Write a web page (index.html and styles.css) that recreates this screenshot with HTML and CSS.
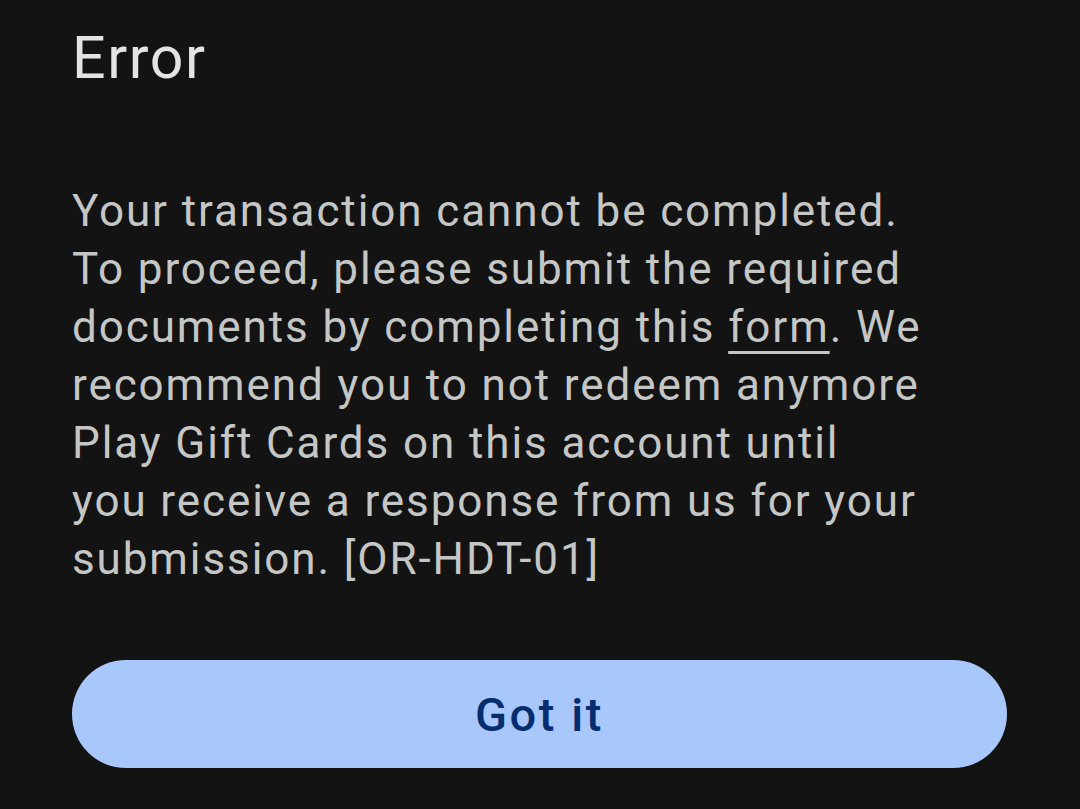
FILE: index.html
```html
<!DOCTYPE html>
<html lang="en">

<head>
    <meta charset="UTF-8">
    <meta name="viewport" content="width=device-width, initial-scale=1.0">
    <title>Error</title>
    <link rel="stylesheet" href="styles.css">
</head>

<body>
    <!-- Error dialog -->
    <div class="dialog">
        <h1 class="dialog-title">Error</h1>
        <p class="dialog-message">
            Your transaction cannot be completed.<br>
            To proceed, please submit the required<br>
            documents by completing this <a href="#" class="form-link">form</a>. We<br>
            recommend you to not redeem anymore<br>
            Play Gift Cards on this account until<br>
            you receive a response from us for your<br>
            submission. [OR-HDT-01]
        </p>
        <button class="dialog-button">Got it</button>
    </div>
</body>

</html>
```

FILE: styles.css
```css
/* Dark dialog */
body {
    font-family: Roboto, "Noto Sans", sans-serif;
    margin: 0;
    padding: 0;
    background-color: #131313;
}

.dialog {
    padding: 23px 73px 0 72px;
    display: flex;
    flex-direction: column;
}

.dialog-title {
    margin: 0;
    font-size: 59px;
    line-height: 70px;
    font-weight: 400;
    letter-spacing: 1.6px;
    color: #e3e3e3;
}

.dialog-message {
    margin: 89px 0 0 0;
    font-size: 44px;
    line-height: 58px;
    letter-spacing: 1.9px;
    color: #c4c7c5;
}

.form-link {
    color: #c4c7c5;
    text-decoration: underline;
    text-underline-offset: 9px;
    text-decoration-thickness: 3px;
}

.dialog-button {
    margin-top: 72px;
    width: 935px;
    height: 108px;
    border: none;
    border-radius: 54px;
    background-color: #a8c7fa;
    color: #062e6f;
    font-family: Roboto, "Noto Sans", sans-serif;
    font-size: 47px;
    font-weight: 500;
    letter-spacing: 2.6px;
}
```
